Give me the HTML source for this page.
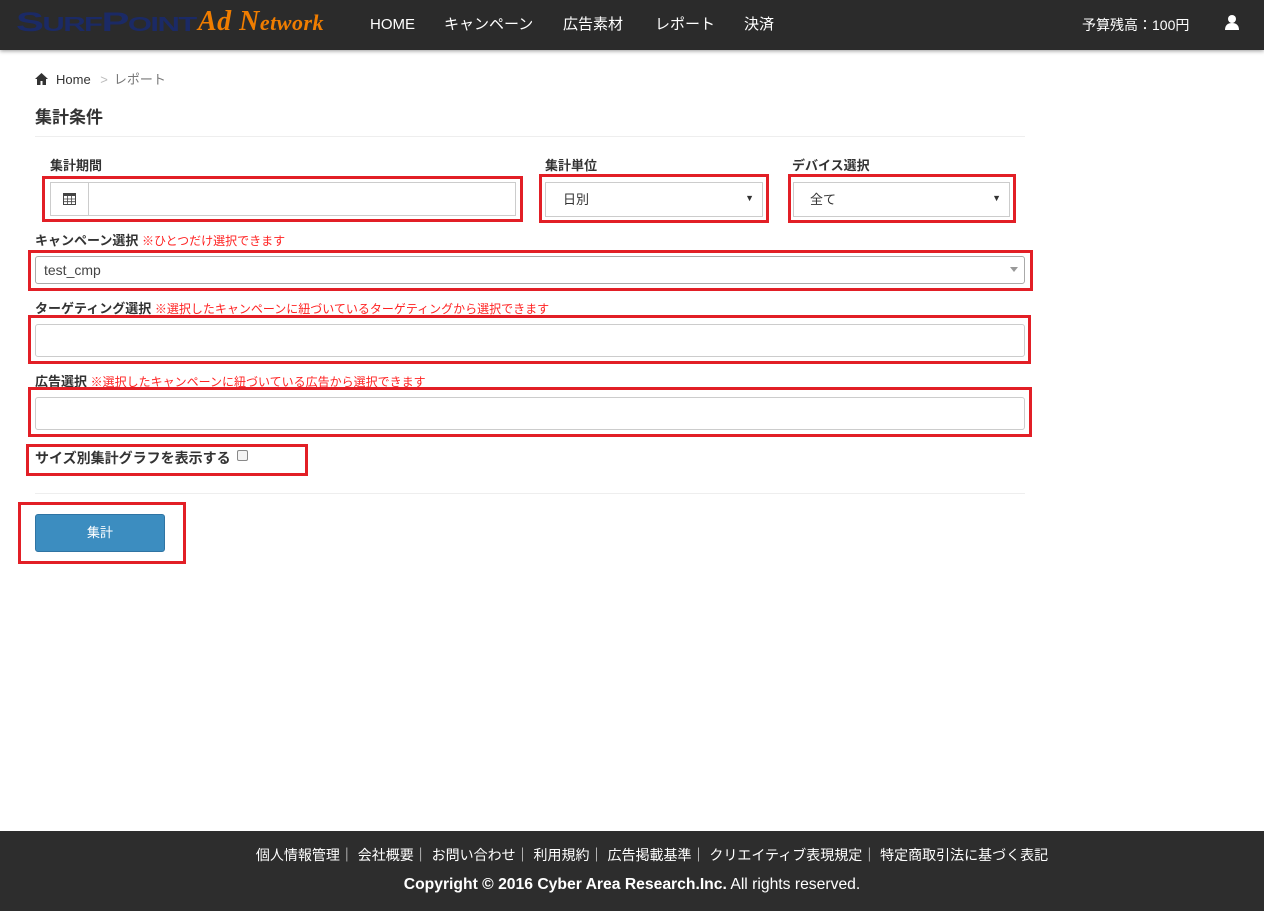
<!DOCTYPE html>
<html><head><meta charset="utf-8"><style>
*{box-sizing:border-box;margin:0;padding:0}
body{width:1264px;height:911px;position:relative;background:#fff;font-family:"Liberation Sans","Noto Sans CJK JP",sans-serif;color:#333;font-size:14px;overflow:hidden}
.a{position:absolute}
.hdr{left:0;top:0;width:1264px;height:50px;background:#2b2b2b;box-shadow:0 1px 4px rgba(0,0,0,.4)}
.nav{color:#fff;font-size:15px;top:15px;line-height:20px}
.rb{position:absolute;border:3px solid #e21f26}
.in{position:absolute;border:1px solid #ccc;border-radius:3px;background:#fff}
.lbl{font-weight:bold;font-size:13px;color:#333;line-height:16px}
.note{color:#f22;font-size:12px;font-weight:normal}
.arr{position:absolute;right:8px;top:10px;font-size:9px;color:#333}
</style></head><body>
<div class="a hdr"></div>
<div class="a" style="left:16px;top:7px;font-family:'Liberation Sans',sans-serif;font-weight:bold;font-size:27px;line-height:30px;color:#1b2a66;transform:scaleX(1.55);transform-origin:0 0;letter-spacing:-1px">S<span style="font-size:20px">URF</span>P<span style="font-size:20px">OINT</span></div>
<div class="a" style="left:198px;top:6px;font-family:'Liberation Serif',serif;font-style:italic;font-weight:bold;font-size:28px;line-height:32px;color:#f07d00;letter-spacing:.5px">Ad N<span style="font-size:22px">etwork</span></div>
<div class="a nav" style="left:370px">HOME</div>
<div class="a nav" style="left:444px">キャンペーン</div>
<div class="a nav" style="left:563px">広告素材</div>
<div class="a nav" style="left:655px">レポート</div>
<div class="a nav" style="left:744px">決済</div>
<div class="a nav" style="left:1082px;font-size:14px;top:15px">予算残高：100円</div>
<svg class="a" style="left:1224px;top:14px" width="16" height="16" viewBox="0 0 16 16"><circle cx="8" cy="5" r="4" fill="#fff"/><path d="M1 16c0-5 3-7 7-7s7 2 7 7z" fill="#fff"/></svg>

<svg class="a" style="left:35px;top:73px" width="13" height="12" viewBox="0 0 13 12"><path d="M6.5 0L0 6h2v6h3.5V8h2v4H11V6h2z" fill="#333"/></svg>
<div class="a" style="left:56px;top:72px;font-size:13px;line-height:16px;color:#333">Home <span style="color:#bbb;margin:0 6px">&gt;</span><span style="color:#777">レポート</span></div>
<div class="a" style="left:35px;top:107px;font-size:17px;line-height:22px;font-weight:bold">集計条件</div>
<div class="a" style="left:35px;top:136px;width:990px;height:1px;background:#eee"></div>

<div class="a lbl" style="left:50px;top:158px">集計期間</div>
<div class="rb" style="left:42px;top:176px;width:481px;height:46px"></div>
<div class="in" style="left:50px;top:182px;width:466px;height:34px;border-radius:0"></div>
<div class="a" style="left:88px;top:183px;width:1px;height:32px;background:#ccc"></div>
<svg class="a" style="left:63px;top:192px" width="13" height="13" viewBox="0 0 13 13"><rect x="0.5" y="1.5" width="12" height="11" fill="none" stroke="#444"/><rect x="0.5" y="1.5" width="12" height="2.5" fill="#444"/><path d="M4.5 4v8M8.5 4v8M1 7h11M1 9.7h11" stroke="#444" stroke-width=".8"/></svg>

<div class="a lbl" style="left:545px;top:158px">集計単位</div>
<div class="rb" style="left:539px;top:174px;width:230px;height:49px"></div>
<div class="in" style="left:545px;top:182px;width:218px;height:35px;border-radius:0"><span class="a" style="left:17px;top:9px;font-size:13px;line-height:16px">日別</span><span class="arr">▼</span></div>
<div class="a lbl" style="left:792px;top:158px">デバイス選択</div>
<div class="rb" style="left:788px;top:174px;width:228px;height:49px"></div>
<div class="in" style="left:793px;top:182px;width:217px;height:35px;border-radius:0"><span class="a" style="left:16px;top:9px;font-size:13px;line-height:16px">全て</span><span class="arr">▼</span></div>

<div class="a lbl" style="left:35px;top:233px">キャンペーン選択 <span class="note">※ひとつだけ選択できます</span></div>
<div class="rb" style="left:28px;top:250px;width:1005px;height:41px"></div>
<div class="in" style="left:35px;top:256px;width:990px;height:28px;border-color:#aaa"><span class="a" style="left:8px;top:5px;font-size:14px;line-height:16px;color:#444">test_cmp</span><span class="a" style="right:6px;top:10px;border:4px solid transparent;border-top:5px solid #999"></span></div>

<div class="a lbl" style="left:35px;top:301px">ターゲティング選択 <span class="note">※選択したキャンペーンに紐づいているターゲティングから選択できます</span></div>
<div class="rb" style="left:28px;top:315px;width:1003px;height:49px"></div>
<div class="in" style="left:35px;top:324px;width:990px;height:33px"></div>

<div class="a lbl" style="left:35px;top:374px">広告選択 <span class="note">※選択したキャンペーンに紐づいている広告から選択できます</span></div>
<div class="rb" style="left:28px;top:387px;width:1004px;height:50px"></div>
<div class="in" style="left:35px;top:397px;width:990px;height:33px"></div>

<div class="rb" style="left:26px;top:444px;width:282px;height:32px"></div>
<div class="a lbl" style="left:35px;top:450px;font-size:14px">サイズ別集計グラフを表示する</div>
<div class="a" style="left:237px;top:450px;width:11px;height:11px;border:1px solid #888;border-radius:2px;background:#f4f4f4"></div>

<div class="a" style="left:35px;top:493px;width:990px;height:1px;background:#eee"></div>
<div class="rb" style="left:18px;top:502px;width:168px;height:62px"></div>
<div class="a" style="left:35px;top:514px;width:130px;height:38px;background:#3c8dc0;border:1px solid #2f74a3;border-radius:3px;color:#fff;font-size:13px;text-align:center;line-height:36px">集計</div>

<div class="a" style="left:0;top:831px;width:1264px;height:80px;background:#2d2d2d"></div>
<div class="a" style="left:20px;top:846px;width:1264px;text-align:center;color:#fff;font-size:14px;line-height:18px">個人情報管理｜ 会社概要｜ お問い合わせ｜ 利用規約｜ 広告掲載基準｜ クリエイティブ表現規定｜ 特定商取引法に基づく表記</div>
<div class="a" style="left:0;top:876px;width:1264px;text-align:center;color:#fff;font-size:15.7px;line-height:18px"><b>Copyright © 2016 Cyber Area Research.Inc.</b> All rights reserved.</div>
</body></html>
